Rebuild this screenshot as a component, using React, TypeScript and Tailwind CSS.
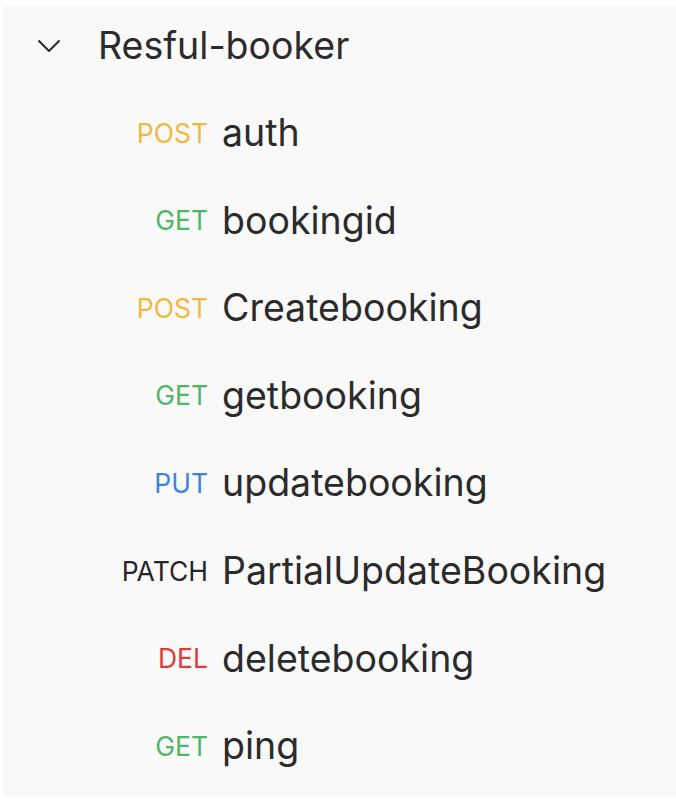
const requests = [
  { method: 'POST', name: 'auth', color: 'text-[#f0b840]' },
  { method: 'GET', name: 'bookingid', color: 'text-[#50b566]' },
  { method: 'POST', name: 'Createbooking', color: 'text-[#f0b840]' },
  { method: 'GET', name: 'getbooking', color: 'text-[#50b566]' },
  { method: 'PUT', name: 'updatebooking', color: 'text-[#3f83e0]' },
  { method: 'PATCH', name: 'PartialUpdateBooking', color: 'text-[#262626]' },
  { method: 'DEL', name: 'deletebooking', color: 'text-[#df3b3b]' },
  { method: 'GET', name: 'ping', color: 'text-[#50b566]' }
]

export default function App() {
  return (
    <div className="w-[676px] h-[802px] bg-white pt-[6px] pl-[3px] pb-[6px] font-['Inter',sans-serif]">
      <div className="h-full bg-[#f9f9f9] pt-[20px]">
        {/* Collection header */}
        <div className="flex items-center h-[40px]">
          <div className="w-[95px] pl-[34px] flex items-center">
            <svg width="24" height="24" viewBox="0 0 24 24" fill="none" stroke="#2b2b2b" strokeWidth="2" strokeLinecap="round" strokeLinejoin="round">
              <path d="M2 7l10 10 10-10" />
            </svg>
          </div>
          <span className="text-[37.5px] text-[#2b2b2b] leading-none">Resful-booker</span>
        </div>

        {/* Requests */}
        <div className="mt-[23px]">
          {requests.map((r, i) => (
            <div key={i} className="flex items-center h-[87.6px]">
              <span className={`w-[205px] text-right text-[26.5px] leading-none ${r.color}`}>
                {r.method}
              </span>
              <span className="ml-[14px] text-[37.5px] text-[#2b2b2b] leading-none">{r.name}</span>
            </div>
          ))}
        </div>
      </div>
    </div>
  )
}
